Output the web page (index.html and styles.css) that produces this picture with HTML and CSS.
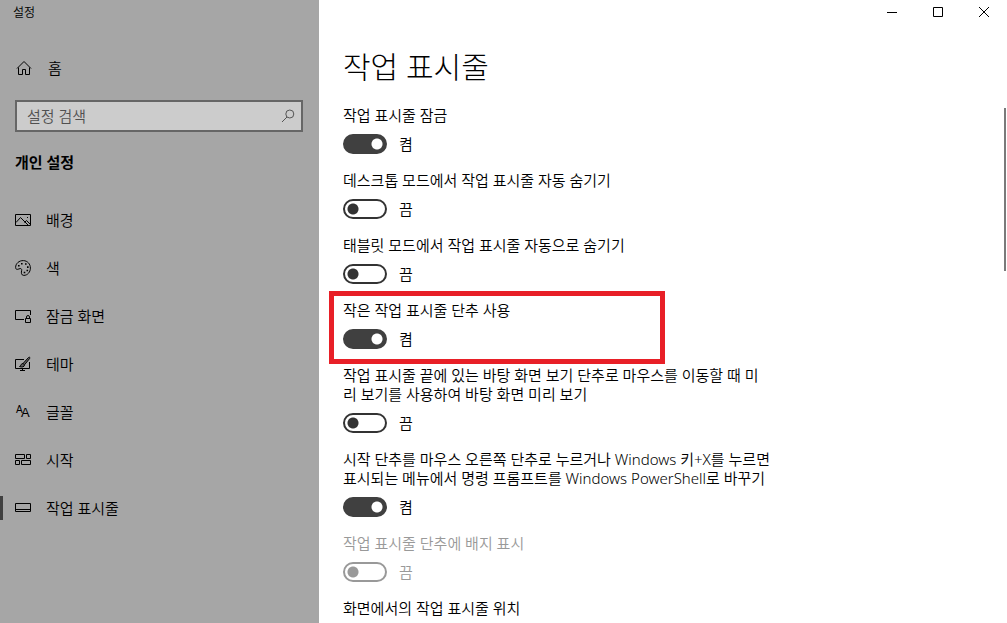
FILE: index.html
```html
<!DOCTYPE html>
<html lang="ko">
<head>
    <meta charset="UTF-8">
    <meta name="viewport" content="width=device-width, initial-scale=1.0">
    <title>설정</title>
    <link rel="stylesheet" href="styles.css">
</head>
<body>
    <aside class="sidebar">
        <div class="window-title">설정</div>

        <a href="#" class="home">
            <svg class="icon" viewBox="0 0 16 16"><path d="M1 8.5 8 1.5l7 7M2.5 7.5v7h4v-5h3v5h4v-7"/></svg>
            홈
        </a>

        <form class="search">
            <input type="search" class="search-input" placeholder="설정 검색" aria-label="설정 검색">
            <button type="submit" class="search-btn" aria-label="검색">
                <svg viewBox="0 0 14 14"><circle cx="8.8" cy="5" r="4"/><path d="M6 8 1 13"/></svg>
            </button>
        </form>

        <h2 class="section-title">개인 설정</h2>

        <nav class="menu">
            <a href="#" class="menu-item">
                <svg class="icon" viewBox="0 0 16 16"><path d="M.5 2.5h15v11H.5zM1 10.5l4.5-5 7.500 7.500M9.500 10.500l2-2 4 4"/><path d="M12 5.500h1"/></svg>
                배경
            </a>
            <a href="#" class="menu-item">
                <svg class="icon" viewBox="0 0 16 16"><path d="M8.5.6C4 .4.6 3.600.6 7.500c0 1.300.7 1.900 1.700 1.900 1.400 0 1.900-.9 3-.9 1.200 0 1.600.9 1.300 2.200-.4 1.700-.5 4.700 2.200 4.700 3.800 0 6.600-3.400 6.600-7.300C15.400 3.900 12.400.8 8.500.6z"/><path class="dots" d="M3 5h1.600v1.600H3zM6 3h1.600v1.600H6zM10 3.200h1.600v1.600H10zM12 6.300h1.600v1.600H12zM11.500 9.700h1.600v1.600h-1.600zM8.700 11.700h1.600v1.600H8.700z"/></svg>
                색
            </a>
            <a href="#" class="menu-item">
                <svg class="icon" viewBox="0 0 16 16"><path d="M9 11.500H.5v-9h15V7M10.500 10.500h5v4h-5zM11.500 10.500V9q0-1.500 1.500-1.500T14.500 9v1.500"/></svg>
                잠금 화면
            </a>
            <a href="#" class="menu-item">
                <svg class="icon" viewBox="0 0 16 16"><path d="M9 3.500H.5v9h14V6M7.500 12.500v2M5 14.500h5"/><path class="brush" d="M8 7.500 13.500 1.500q1-.8 1.300 0 .3.500-.3 1.200L9.500 8.800zM8 7.500C5.500 7.500 6.500 10 4.500 10.500 7 11.500 9.500 11 9.500 8.800"/></svg>
                테마
            </a>
            <a href="#" class="menu-item">
                <svg class="icon font-icon" viewBox="0 0 16 16" aria-hidden="true"><text x="1" y="9" font-size="10">A</text><text x="6" y="13" font-size="13">A</text></svg>
                글꼴
            </a>
            <a href="#" class="menu-item">
                <svg class="icon" viewBox="0 0 16 16"><path d="M.5 2.500h9v4h-9zM11.500 2.500h4v4h-4zM.5 8.500h4v4h-4zM6.500 8.500h9v4h-9z"/></svg>
                시작
            </a>
            <a href="#" class="menu-item active">
                <svg class="icon" viewBox="0 0 16 16"><path d="M.5 3.500h15v8H.5zM.5 9.500h15"/></svg>
                작업 표시줄
            </a>
        </nav>
    </aside>

    <main class="content">
        <div class="window-controls">
            <button class="window-btn" aria-label="최소화"><svg viewBox="0 0 10 10"><path d="M0 5.500h10"/></svg></button>
            <button class="window-btn" aria-label="최대화"><svg viewBox="0 0 10 10"><path d="M.5.5h9v9h-9z"/></svg></button>
            <button class="window-btn" aria-label="닫기"><svg viewBox="0 0 10 10"><path d="M0 0l10 10M10 0 0 10"/></svg></button>
        </div>

        <div class="settings">
            <h1>작업 표시줄</h1>

            <div class="setting">
                <label for="lock">작업 표시줄 잠금</label>
                <div class="switch"><input type="checkbox" id="lock" checked><span>켬</span></div>
            </div>
            <div class="setting">
                <label for="hide-desktop">데스크톱 모드에서 작업 표시줄 자동 숨기기</label>
                <div class="switch"><input type="checkbox" id="hide-desktop"><span>끔</span></div>
            </div>
            <div class="setting">
                <label for="hide-tablet">태블릿 모드에서 작업 표시줄 자동으로 숨기기</label>
                <div class="switch"><input type="checkbox" id="hide-tablet"><span>끔</span></div>
            </div>
            <div class="setting highlight">
                <label for="small-buttons">작은 작업 표시줄 단추 사용</label>
                <div class="switch"><input type="checkbox" id="small-buttons" checked><span>켬</span></div>
            </div>
            <div class="setting">
                <label for="peek">작업 표시줄 끝에 있는 바탕 화면 보기 단추로 마우스를 이동할 때 미<br>리 보기를 사용하여 바탕 화면 미리 보기</label>
                <div class="switch"><input type="checkbox" id="peek"><span>끔</span></div>
            </div>
            <div class="setting">
                <label for="powershell">시작 단추를 마우스 오른쪽 단추로 누르거나 Windows 키+X를 누르면 표시되는 메뉴에서 명령 프롬프트를 Windows PowerShell로 바꾸기</label>
                <div class="switch"><input type="checkbox" id="powershell" checked><span>켬</span></div>
            </div>
            <div class="setting disabled">
                <label for="badges">작업 표시줄 단추에 배지 표시</label>
                <div class="switch"><input type="checkbox" id="badges" disabled><span>끔</span></div>
            </div>
            <div class="setting">
                <div>화면에서의 작업 표시줄 위치</div>
            </div>
        </div>

        <div class="scrollbar"></div>
    </main>
</body>
</html>
```
FILE: styles.css
```css
*,
*::after {
    box-sizing: border-box;
}

body {
    font-family: "Noto Sans", "Noto Sans CJK KR", sans-serif;
    font-size: 15px;
    font-weight: 350;
    line-height: 19px;
    margin: 0;
    color: #000;
    background: #fff;
    display: flex;
    min-height: 100vh;
}

a {
    color: inherit;
    text-decoration: none;
}

svg {
    fill: none;
    stroke: currentColor;
    stroke-width: 1;
}

.sidebar {
    flex: 0 0 319px;
    background: #a6a6a6;
}

.window-title {
    font-size: 12px;
    line-height: 26px;
    padding-left: 13px;
}

.icon {
    width: 16px;
    height: 16px;
    flex: none;
}

.home {
    display: flex;
    align-items: center;
    gap: 16px;
    height: 48px;
    margin-top: 18px;
    padding-left: 16px;
}

.search {
    display: flex;
    align-items: center;
    height: 32px;
    margin: 8px 16px 0 15px;
    border: 2px solid #666;
    background: #ccc;
}

.search-input {
    flex: 1;
    min-width: 0;
    border: 0;
    padding: 0 10px;
    background: none;
    font: inherit;
    outline: none;
}

.search-input::placeholder {
    color: #505050;
    opacity: 1;
}

.search-btn {
    display: flex;
    padding: 0 6px;
    border: 0;
    background: none;
    color: #555;
}

.search-btn svg {
    width: 14px;
    height: 14px;
}

.section-title {
    font-size: 15px;
    line-height: 20px;
    font-weight: bold;
    margin: 20px 0 24px 15px;
}

.menu-item {
    display: flex;
    align-items: center;
    gap: 15px;
    height: 48px;
    padding-left: 15px;
}

.menu-item.active {
    background: linear-gradient(#404040, #404040) left center / 3px 24px no-repeat;
}

.dots {
    fill: currentColor;
    stroke: none;
}

.brush {
    fill: #666;
}

.font-icon {
    fill: currentColor;
    stroke: none;
    font-family: "Liberation Sans", sans-serif;
    font-weight: normal;
    overflow: visible;
}

.content {
    flex: 1;
    min-width: 0;
    position: relative;
}

.window-controls {
    display: flex;
    justify-content: flex-end;
}

.window-btn {
    display: flex;
    align-items: center;
    justify-content: center;
    width: 46px;
    height: 24px;
    padding: 0;
    border: 0;
    background: none;
    color: #000;
}

.window-btn svg {
    width: 10px;
    height: 10px;
}

.settings {
    max-width: 466px;
    padding-left: 24px;
}

h1 {
    font-size: 30px;
    line-height: 40px;
    font-weight: 300;
    margin: 23px 0 19px;
}

.setting {
    position: relative;
    margin-bottom: 17px;
}

.setting:last-child {
    margin-bottom: 0;
}

.setting label {
    display: block;
}

.switch {
    display: flex;
    align-items: center;
    gap: 12px;
    height: 20px;
    margin-top: 9px;
}

.switch input {
    appearance: none;
    width: 44px;
    height: 20px;
    margin: 0;
    border: 2px solid #333;
    border-radius: 10px;
    background: radial-gradient(circle at 8px 8px, #333 5px, transparent 6px);
}

.switch input:checked {
    border-color: #404040;
    background: radial-gradient(circle at 32px 8px, #fff 5px, #404040 6px);
}

.disabled {
    color: #999;
}

.disabled .switch input {
    border-color: #999;
    background: radial-gradient(circle at 8px 8px, #999 5px, transparent 6px);
}

/* red frame round the option */
.highlight::after {
    content: "";
    position: absolute;
    top: -10px;
    bottom: -15px;
    left: -14px;
    width: 336px;
    border: 5px solid #e81f27;
    pointer-events: none;
}

.scrollbar {
    position: absolute;
    top: 108px;
    right: 1px;
    width: 2px;
    height: 163px;
    background: #7a7a7a;
}
```
